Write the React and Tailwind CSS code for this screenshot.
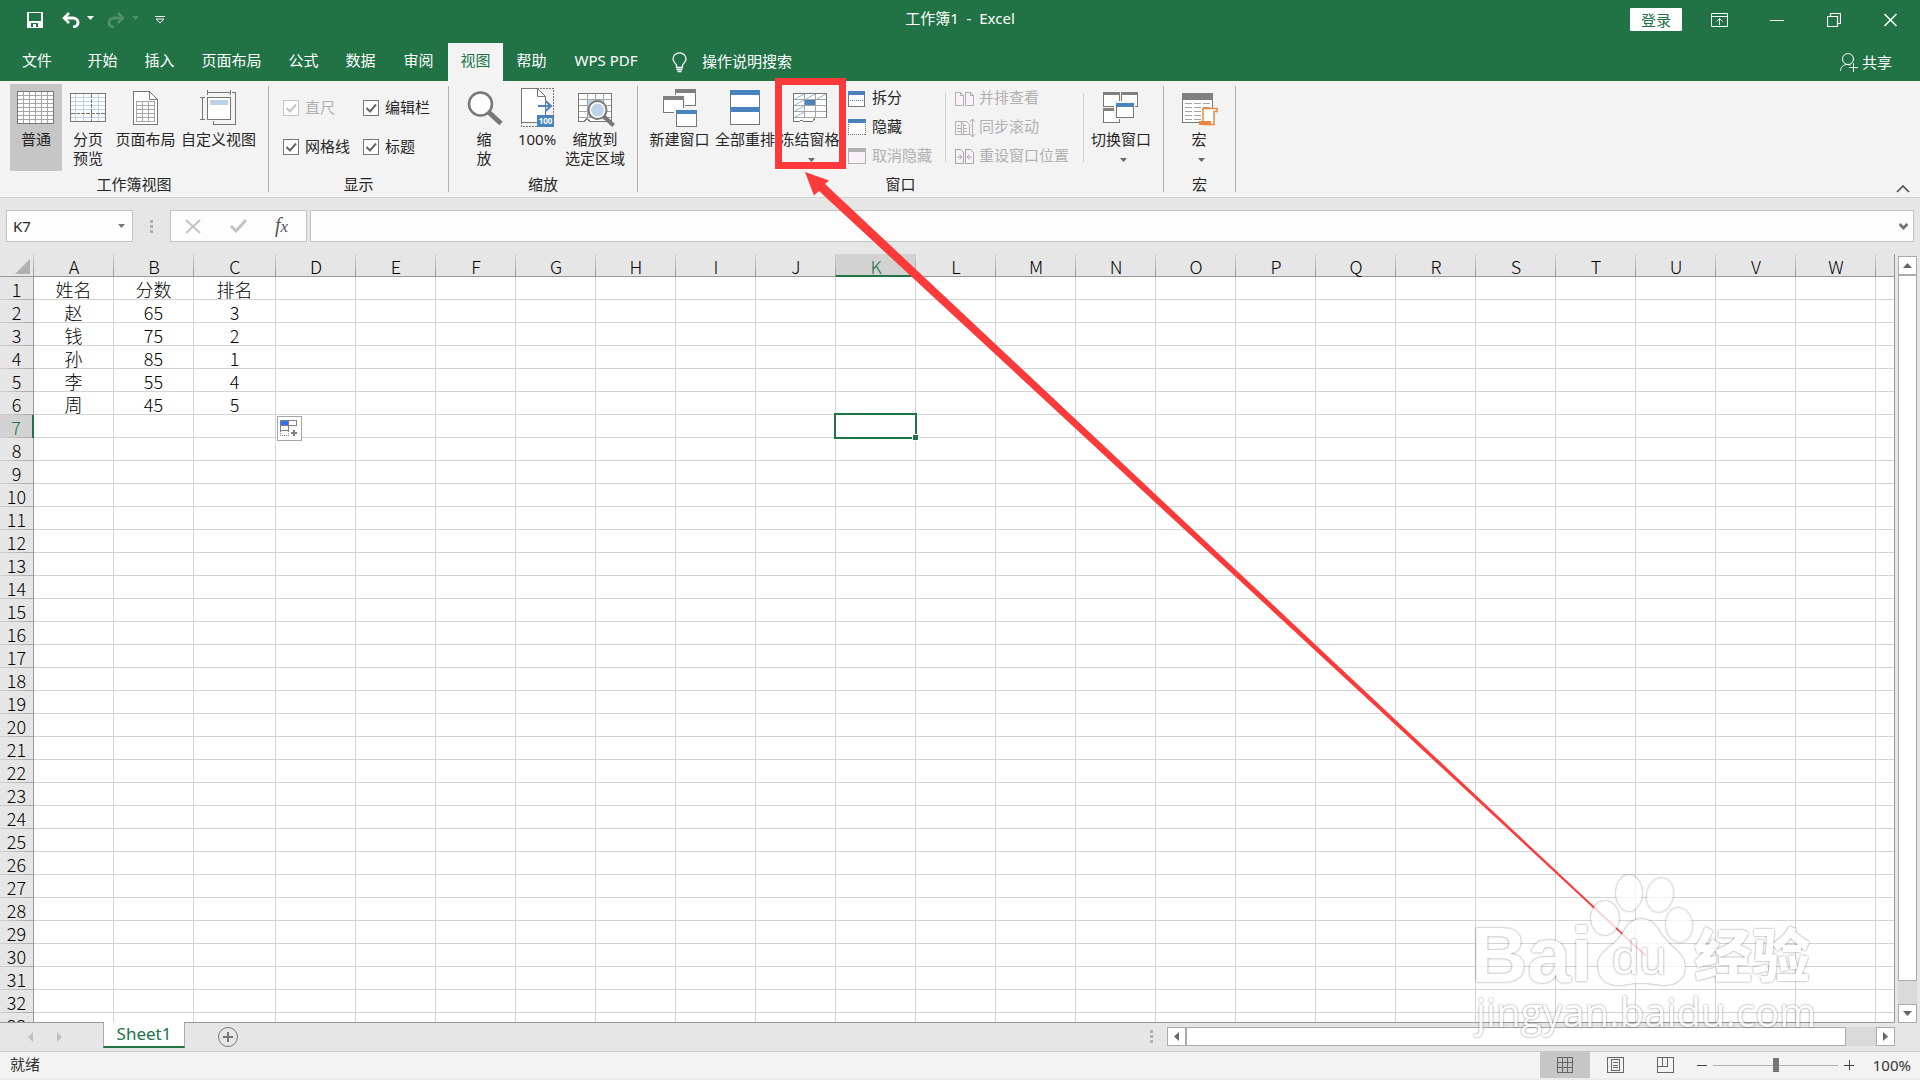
import { useState } from 'react';

const COLUMNS = 'ABCDEFGHIJKLMNOPQRSTUVW'.split('');
const ROWS = Array.from({ length: 33 }, (_, i) => i + 1);

const DATA = {
  1: ['姓名', '分数', '排名'],
  2: ['赵', '65', '3'],
  3: ['钱', '75', '2'],
  4: ['孙', '85', '1'],
  5: ['李', '55', '4'],
  6: ['周', '45', '5'],
};

const TABS = [
  { label: '文件', width: 'w-[74px]' },
  { label: '开始', width: 'w-[57px]' },
  { label: '插入', width: 'w-[57px]' },
  { label: '页面布局', width: 'w-[87px]' },
  { label: '公式', width: 'w-[57px]' },
  { label: '数据', width: 'w-[57px]' },
  { label: '审阅', width: 'w-[59px]' },
  { label: '视图', width: 'w-[55px]' },
  { label: '帮助', width: 'w-[57px]' },
  { label: 'WPS PDF', width: 'w-[92px]' },
];

// small down arrow used all over the ribbon
const Caret = ({ className = '' }) => (
  <svg width="7" height="4" viewBox="0 0 7 4" className={className} aria-hidden="true">
    <path d="M0 0h7L3.5 4z" fill="currentColor" />
  </svg>
);

// ---------- ribbon icons ----------

const BigIcon = ({ children }) => (
  <svg width="40" height="46" viewBox="0 0 40 46" fill="none" stroke="#777" shapeRendering="crispEdges" className="shrink-0" aria-hidden="true">
    {children}
  </svg>
);

const NormalIcon = () => (
  <BigIcon>
    <rect x="1.5" y="7.5" width="36" height="32" fill="#fff" />
    <path stroke="#a6a6a6" d="M7.5 8v31M13.5 8v31M19.5 8v31M25.5 8v31M31.5 8v31M2 11.5h35M2 15.5h35M2 19.5h35M2 23.5h35M2 27.5h35M2 31.5h35M2 35.5h35" />
  </BigIcon>
);

const PageBreakIcon = () => (
  <BigIcon>
    <rect x="2.5" y="9.5" width="35" height="28" fill="#fff" />
    <path stroke="#bdd3ea" d="M7.5 10v27M15.5 10v27M30.5 10v27M3 13.5h34M3 17.5h34M3 21.5h34M3 25.5h34M3 33.5h34" />
    <path stroke="#777" strokeDasharray="4 1" d="M23.5 10v27M3 29.5h34" />
  </BigIcon>
);

const PageLayoutIcon = () => (
  <BigIcon>
    <path fill="#fff" d="M7.5 7.5h16l8 8v25h-24z" />
    <path d="M23.5 7.5v8h8" shapeRendering="auto" />
    <path stroke="#a6a6a6" d="M10.5 17.5h18v20h-18zM10.5 21.5h18M10.5 25.5h18M10.5 29.5h18M10.5 33.5h18M16.5 17.5v20M22.5 17.5v20" />
  </BigIcon>
);

const CustomViewIcon = () => (
  <BigIcon>
    <path d="M32.5 8.5h4v32h-22v-4M8.5 6v5M31.5 6v5M9 8.5h22M3.5 13.5v22M1 13.5h5M1 35.5h5" />
    <rect x="8.5" y="13.5" width="23" height="22" fill="#fff" />
    <path fill="#bdd3ea" stroke="none" d="M11 16h18v5H11z" />
  </BigIcon>
);

const ZoomIcon = () => (
  <BigIcon>
    <g shapeRendering="auto">
      <circle cx="16.5" cy="20" r="11.5" fill="#fff" strokeWidth="2.5" />
      <path strokeWidth="5" d="M25 28.5l12 11" />
    </g>
  </BigIcon>
);

const HundredIcon = () => (
  <BigIcon>
    <path strokeDasharray="2 1" d="M20 4.5h16.5V31M4.5 38v4.5H20" />
    <path fill="#fff" d="M4.5 4.5h16l8 8v25.5h-24z" />
    <path d="M20.5 4.5v8h8" shapeRendering="auto" />
    <path fill="#4a82bd" stroke="none" d="M20 31h17v12H20z" />
    <path stroke="#4a82bd" strokeWidth="2" shapeRendering="auto" d="M21 22h13M28.5 17l5.5 5-5.5 5" />
    <text x="28.5" y="40" fill="#fff" stroke="none" fontSize="8" fontWeight="bold" textAnchor="middle">100</text>
  </BigIcon>
);

const ZoomSelectionIcon = () => (
  <BigIcon>
    <path fill="#fff" stroke="#777" d="M3.5 9.5h33v28H19h-4l-3-3-3 3H3.5z" />
    <path stroke="#a6a6a6" d="M12.5 10v26M20.5 10v26M28.5 10v26M4 15.5h32M4 21.5h32M4 27.5h32M4 33.5h32" />
    <path fill="#bdd3ea" stroke="none" d="M13 16h15v17H13z" />
    <g shapeRendering="auto">
      <circle cx="22.5" cy="26" r="9" fill="#fff" strokeWidth="2" />
      <circle cx="22.5" cy="26" r="6.5" fill="#bdd3ea" stroke="none" />
      <path strokeWidth="4" d="M29 32.5l9.5 9" />
    </g>
  </BigIcon>
);

const MiniWindow = ({ x, y, w = 20, h = 16, color = '#808080', bar = 4 }) => (
  <g>
    <rect x={x + 0.5} y={y + 0.5} width={w} height={h} fill="#fff" />
    <rect x={x} y={y} width={w + 1} height={bar} fill={color} stroke="none" />
  </g>
);

const NewWindowIcon = () => (
  <BigIcon>
    <MiniWindow x={15} y={5} />
    <path fill="#f3f3f3" stroke="none" d="M1 11h24v18H1z" />
    <MiniWindow x={3} y={12} />
    <path fill="#f3f3f3" stroke="none" d="M14 24h23v20H14z" />
    <MiniWindow x={16} y={26} color="#4a82bd" />
  </BigIcon>
);

const ArrangeAllIcon = () => (
  <BigIcon>
    <MiniWindow x={5} y={6} w={29} h={17} color="#4a82bd" bar={5} />
    <MiniWindow x={5} y={23} w={29} h={17} color="#4a82bd" bar={5} />
  </BigIcon>
);

const FreezeIcon = () => (
  <BigIcon>
    <path fill="#fff" d="M3.5 9.5h33v24H25.5l-3 4h-8l-3-1-3 1h-5z" />
    <path stroke="#8db4dc" shapeRendering="auto" d="M5 15l9-5M5 21l9-5M5 27l9-5M5 33l9-5M16 15l9-5M27 15l9-5" />
    <path stroke="#a6a6a6" d="M14.5 10v24M25.5 10v24M4 15.5h32M4 21.5h32M4 27.5h32M4 33.5h32" />
    <path fill="#4a82bd" stroke="none" d="M15 16h10v5H15z" />
  </BigIcon>
);

const SwitchIcon = () => (
  <BigIcon>
    <MiniWindow x={2} y={8} w={16} h={14} bar={3} />
    <MiniWindow x={20} y={8} w={16} h={14} bar={3} />
    <MiniWindow x={2} y={24} w={16} h={14} bar={3} />
    <path fill="#f3f3f3" stroke="none" d="M13 17h21v18H13z" />
    <MiniWindow x={15} y={19} w={17} h={14} color="#4a82bd" bar={4} />
  </BigIcon>
);

const MacroIcon = () => (
  <BigIcon>
    <MiniWindow x={3} y={9} w={30} h={29} bar={7} />
    <path stroke="#a6a6a6" strokeDasharray="7 2" d="M6 19.5h25M6 23.5h25M6 27.5h25M6 31.5h25M6 35.5h25" />
    <path fill="#fff" stroke="#e8883a" strokeWidth="1.5" shapeRendering="auto" d="M24 38V24.5h14v3h-3V40.5H24" />
    <path fill="#e8883a" stroke="none" d="M20 37h12v4H20z" />
  </BigIcon>
);

const SmallIcon = ({ children, stroke = '#777' }) => (
  <svg width="20" height="20" viewBox="0 0 20 20" fill="none" stroke={stroke} shapeRendering="crispEdges" className="shrink-0" aria-hidden="true">
    {children}
  </svg>
);

const SplitIcon = () => (
  <SmallIcon>
    <rect x="0.5" y="2.5" width="16" height="15" fill="#fff" />
    <path fill="#4a82bd" stroke="none" d="M0 2h17v4H0z" />
    <path stroke="#4a82bd" strokeDasharray="1 1" d="M2 11.5h13" />
  </SmallIcon>
);

const HideIcon = () => (
  <SmallIcon>
    <rect x="0.5" y="2.5" width="17" height="14" fill="#fff" strokeDasharray="1 1" />
    <path fill="#4a82bd" stroke="none" d="M0 1h18v4H0z" />
  </SmallIcon>
);

const UnhideIcon = () => (
  <SmallIcon stroke="#b1b1b1">
    <rect x="0.5" y="2.5" width="17" height="14" fill="#f8f2f8" />
    <path fill="#b1b1b1" stroke="none" d="M0 1h18v4H0z" />
  </SmallIcon>
);

const SideBySideIcon = () => (
  <SmallIcon stroke="#b1b1b1">
    <path fill="#f8f2f8" d="M.5 3.5h5l3 3v10h-8zM10.5 3.5h5l3 3v10h-8zM5.5 3.5v3h3M15.5 3.5v3h3" />
  </SmallIcon>
);

const SyncScrollIcon = () => (
  <SmallIcon stroke="#b1b1b1">
    <path fill="#f8f2f8" d="M.5 3.5h5l3 3v10h-8zM6.500 3.500h5l3 3v10h-8z" />
    <path d="M2 7.5h3M2 10.5h4M2 13.5h4M8 7.5h3M8 10.5h4M8 13.5h4" />
    <path shapeRendering="auto" d="M17.5 1v18M15 4l2.5-3L20 4M15 16l2.5 3 2.5-3" />
  </SmallIcon>
);

const ResetIcon = () => (
  <SmallIcon stroke="#a6a6a6">
    <path fill="#f8f2f8" d="M.5 2.5h5l3 3v11h-8zM10.5 2.5h5l3 3v11h-8z" />
    <path shapeRendering="auto" d="M2 10h5M4.5 7.5L7 10l-2.5 2.5M17 10h-5M14.5 7.5L12 10l2.5 2.5" />
  </SmallIcon>
);

// ---------- ribbon pieces ----------

const Group = ({ label, className = '', children }) => (
  <section className={`my-[5px] flex h-[106px] shrink-0 flex-col border-r border-[#b1b1b1] ${className}`} aria-label={label}>
    <div className="-mt-[2px] flex h-[92px] items-start">{children}</div>
    <div className="text-center leading-[16px]">{label}</div>
  </section>
);

const BigButton = ({ icon, lines, width, active, caret }) => (
  <button type="button" className={`flex h-[87px] shrink-0 flex-col items-center leading-[19px] whitespace-nowrap ${width} ${active ? 'bg-[#c6c6c6]' : ''}`}>
    {icon}
    {lines.map((l) => (
      <span key={l}>{l}</span>
    ))}
    {caret && <Caret className="mt-[9px] ml-1 text-[#666]" />}
  </button>
);

const SmallButton = ({ icon, label, disabled }) => (
  <button type="button" disabled={disabled} className="flex h-[29px] items-center gap-1 whitespace-nowrap disabled:text-[#b1b1b1]">
    {icon}
    <span className="pb-[2px]">{label}</span>
  </button>
);

const Check = ({ label, disabled }) => {
  const [on, setOn] = useState(true);
  return (
    <label className={`flex h-[39px] items-center gap-[6px] whitespace-nowrap ${disabled ? 'text-[#b1b1b1]' : ''}`}>
      <span className="grid size-4 *:col-start-1 *:row-start-1">
        <input
          type="checkbox"
          checked={on}
          disabled={disabled}
          onChange={(e) => setOn(e.target.checked)}
          className="peer size-4 appearance-none border border-[#777] bg-white disabled:border-[#c6c6c6]"
        />
        <svg viewBox="0 0 16 16" className="pointer-events-none hidden size-4 text-[#666] peer-checked:block peer-disabled:text-[#c6c6c6]" fill="none" stroke="currentColor" strokeWidth="2">
          <path d="M3.5 8l3.5 3.5L13 4.5" />
        </svg>
      </span>
      {label}
    </label>
  );
};

const Ribbon = () => (
  <div className="flex h-[117px] overflow-hidden border-b border-[#d2d2d2] bg-[#f3f3f3]">
    <Group label="工作簿视图" className="w-[269px]">
      <div className="flex pl-[10px]">
        <BigButton icon={<NormalIcon />} lines={['普通']} width="w-[52px]" active />
        <BigButton icon={<PageBreakIcon />} lines={['分页', '预览']} width="w-[52px]" />
        <BigButton icon={<PageLayoutIcon />} lines={['页面布局']} width="w-[63px]" />
        <BigButton icon={<CustomViewIcon />} lines={['自定义视图']} width="w-[83px]" />
      </div>
    </Group>
    <Group label="显示" className="w-[180px]">
      <div className="grid grid-cols-[80px_auto] pt-1 pl-[14px]">
        <Check label="直尺" disabled />
        <Check label="编辑栏" />
        <Check label="网格线" />
        <Check label="标题" />
      </div>
    </Group>
    <Group label="缩放" className="w-[189px]">
      <div className="flex pl-[6px]">
        <BigButton icon={<ZoomIcon />} lines={['缩', '放']} width="w-[58px]" />
        <BigButton icon={<HundredIcon />} lines={['100%']} width="w-[48px]" />
        <BigButton icon={<ZoomSelectionIcon />} lines={['缩放到', '选定区域']} width="w-[68px]" />
      </div>
    </Group>
    <Group label="窗口" className="w-[526px]">
      <div className="flex pl-2">
        <BigButton icon={<NewWindowIcon />} lines={['新建窗口']} width="w-[67px]" />
        <BigButton icon={<ArrangeAllIcon />} lines={['全部重排']} width="w-[64px]" />
        <BigButton icon={<FreezeIcon />} lines={['冻结窗格']} width="w-[65px]" caret />
      </div>
      <div className="ml-[6px] w-[97px]">
        <SmallButton icon={<SplitIcon />} label="拆分" />
        <SmallButton icon={<HideIcon />} label="隐藏" />
        <SmallButton icon={<UnhideIcon />} label="取消隐藏" disabled />
      </div>
      <div className="mt-[9px] h-[69px] w-px bg-[#d2d2d2]" />
      <div className="ml-[9px] w-[128px]">
        <SmallButton icon={<SideBySideIcon />} label="并排查看" disabled />
        <SmallButton icon={<SyncScrollIcon />} label="同步滚动" disabled />
        <SmallButton icon={<ResetIcon />} label="重设窗口位置" disabled />
      </div>
      <div className="mt-[9px] h-[69px] w-px bg-[#d2d2d2]" />
      <BigButton icon={<SwitchIcon />} lines={['切换窗口']} width="w-[74px]" caret />
    </Group>
    <Group label="宏" className="w-[72px]">
      <BigButton icon={<MacroIcon />} lines={['宏']} width="w-[70px]" caret />
    </Group>
    <button type="button" aria-label="折叠功能区" className="mr-[10px] mb-1 ml-auto self-end">
      <svg width="14" height="8" viewBox="0 0 14 8" fill="none" stroke="#444" strokeWidth="1.5">
        <path d="M1 7l6-6 6 6" />
      </svg>
    </button>
  </div>
);

// ---------- title bar and tabs ----------

const TitleBar = () => (
  <header className="grid h-[43px] grid-cols-[1fr_auto_1fr] items-start text-white">
    <div className="flex h-10 items-center pl-[27px]">
      <button type="button" aria-label="保存">
        <svg width="16" height="16" viewBox="0 0 16 16" shapeRendering="crispEdges">
          <path fill="#fff" fillRule="evenodd" d="M0 0h16v16H0zM2 1v8h12V1zM4 11v4h2v-3h3v3h2v-4z" />
        </svg>
      </button>
      <button type="button" aria-label="撤消" className="ml-[19px] flex items-center gap-[7px]">
        <svg width="18" height="16" viewBox="0 0 18 16" fill="none" stroke="#fff" strokeWidth="3">
          <path d="M2 6h9a5 4.500 0 0 1 0 9" />
          <path d="M7 1L2 6l5 5" strokeWidth="2.5" />
        </svg>
        <Caret className="mb-1" />
      </button>
      <button type="button" aria-label="恢复" disabled className="ml-[13px] flex items-center gap-[7px] text-[#4d906b]">
        <svg width="18" height="16" viewBox="0 0 18 16" fill="none" stroke="currentColor" strokeWidth="3">
          <path d="M16 6H7a5 4.500 0 0 0 0 9" />
          <path d="M11 1l5 5-5 5" strokeWidth="2.5" />
        </svg>
        <Caret className="mb-1" />
      </button>
      <button type="button" aria-label="自定义快速访问工具栏" className="ml-4">
        <svg width="10" height="8" viewBox="0 0 10 8" fill="none" stroke="#fff">
          <path d="M0 .5h10M1 3l4 4 4-4z" />
        </svg>
      </button>
    </div>
    <h1 className="pt-[8px] leading-[20px] whitespace-pre">工作簿1  -  Excel</h1>
    <div className="flex h-[39px] items-center justify-end pr-[23px]">
      <button type="button" className="h-[23px] w-[52px] rounded-[1px] bg-white leading-[20px] text-[#217346]">登录</button>
      <button type="button" aria-label="功能区显示选项" className="ml-[29px]">
        <svg width="17" height="14" viewBox="0 0 17 14" fill="none" stroke="#fff">
          <path d="M.5.5h16v13H.5zM.5 3.5h16M8.5 12V5.5M5.5 8.5l3-3 3 3" />
        </svg>
      </button>
      <button type="button" aria-label="最小化" className="ml-[42px]">
        <svg width="14" height="14" viewBox="0 0 14 14" stroke="#fff">
          <path d="M0 7.5h14" />
        </svg>
      </button>
      <button type="button" aria-label="向下还原" className="ml-[43px]">
        <svg width="14" height="14" viewBox="0 0 14 14" fill="none" stroke="#fff" strokeWidth="1.2">
          <path d="M.5 3.5h10v10H.5zM3.500 3.500v-3h10v10h-3" />
        </svg>
      </button>
      <button type="button" aria-label="关闭" className="ml-[43px]">
        <svg width="13" height="14" viewBox="0 0 13 14" stroke="#fff" strokeWidth="1.5">
          <path d="M.5 1l12 12M12.500 1l-12 12" />
        </svg>
      </button>
    </div>
  </header>
);

const TabBar = ({ active, onSelect }) => (
  <nav className="flex h-[38px] items-stretch text-white">
    {TABS.map((t) => (
      <button
        key={t.label}
        type="button"
        onClick={() => onSelect(t.label)}
        className={`shrink-0 pb-1 whitespace-nowrap ${t.width} ${active === t.label ? 'bg-[#f3f3f3] text-[#217346]' : ''}`}
      >
        {t.label}
      </button>
    ))}
    <button type="button" className="ml-5 flex items-center gap-[15px] whitespace-nowrap">
      <svg width="15" height="21" viewBox="0 0 15 21" fill="none" stroke="#fff" strokeWidth="1.3">
        <path d="M4.5 15.5v-2.5C3.5 11 1 10 1 7a6.5 6.2 0 0 1 13 0c0 3-2.5 4-3.5 6v2.5zM4.5 17.5h6M5.5 19.5h4" />
      </svg>
      <span className="pb-[2px]">操作说明搜索</span>
    </button>
    <button type="button" className="mr-[28px] ml-auto flex items-center gap-1 whitespace-nowrap">
      <svg width="18" height="19" viewBox="0 0 18 19" fill="none" stroke="#fff">
        <circle cx="8" cy="6" r="5.5" />
        <path d="M.5 18c0-4 3-6.5 7-6.5 1 0 2 .2 3 .6M13.5 10v9M9 14.500h9" />
      </svg>
      共享
    </button>
  </nav>
);

const Dots = () => (
  <div className="flex flex-col gap-[2px]">
    <i className="size-[3px] bg-[#b1b1b1]" />
    <i className="size-[3px] bg-[#b1b1b1]" />
    <i className="size-[3px] bg-[#b1b1b1]" />
  </div>
);

const FormulaBar = () => (
  <div className="flex h-14 shrink-0 items-center pr-[6px] pl-[6px]">
    <div className="flex h-8 w-[127px] items-center border border-[#c3c3c3] bg-[#fdfdfd] pr-[7px] pl-[6px]">
      <input aria-label="名称框" defaultValue="K7" className="w-0 flex-1 outline-none" />
      <Caret className="text-[#777]" />
    </div>
    <div className="mx-[17px]">
      <Dots />
    </div>
    <div className="flex h-8 w-[137px] items-center border border-[#c3c3c3] bg-[#fdfdfd] pl-[14px]">
      <button type="button" aria-label="取消">
        <svg width="16" height="15" viewBox="0 0 16 15" stroke="#c3c3c3" strokeWidth="2">
          <path d="M1 1l14 13M15 1L1 14" />
        </svg>
      </button>
      <button type="button" aria-label="输入" className="ml-[29px]">
        <svg width="17" height="14" viewBox="0 0 17 14" fill="none" stroke="#c3c3c3" strokeWidth="3">
          <path d="M1 7l5 5L16 1" />
        </svg>
      </button>
      <button type="button" aria-label="插入函数" className="ml-[28px] font-['Liberation_Serif',serif] text-[20px] leading-[24px] text-[#555] italic">
        f<span className="text-[17px]">x</span>
      </button>
    </div>
    <div className="ml-[3px] flex h-8 flex-1 items-center border border-[#c3c3c3] bg-[#fdfdfd] pr-[5px] pl-2">
      <input aria-label="编辑栏" className="w-0 flex-1 outline-none" />
      <svg width="9" height="7" viewBox="0 0 9 7" fill="none" stroke="#777" strokeWidth="3">
        <path d="M.5 1l4 4 4-4" />
      </svg>
    </div>
  </div>
);

// ---------- sheet ----------

const FillOptions = () => (
  <button type="button" aria-label="自动填充选项" className="absolute top-px left-px z-10 size-[25px] border border-[#a6a6a6] bg-white">
    <svg width="23" height="23" viewBox="0 0 23 23" fill="none" stroke="#808080" shapeRendering="crispEdges">
      <path d="M2.5 3.5h16v5h-16zM10.5 3.5v10h-8v-5" />
      <path fill="#2f6fff" stroke="none" d="M3 4h7v4H3z" />
      <path strokeDasharray="1 1" d="M2.5 14v4.5h8V14" />
      <path strokeWidth="2" d="M16 13v6M13 16h6" />
    </svg>
  </button>
);

const ColumnHead = ({ label }) => {
  const selected = label === 'K';
  return (
    <th scope="col" className={`relative h-[23px] border-b p-0 font-light ${selected ? 'border-[#217346] bg-[#d2d2d2] text-[#217346]' : 'border-[#999]'}`}>
      <span className="block h-[22px] leading-[24px]">{label}</span>
      {selected && <span className="absolute inset-x-0 bottom-0 h-px bg-[#217346]" />}
      <span className="absolute inset-y-0 right-0 w-px bg-linear-to-b from-[#d2d2d2] to-[#999]" />
    </th>
  );
};

const Grid = () => (
  <div className="min-w-0 flex-1 overflow-hidden border-r border-b border-[#999]">
    <table className="w-full table-fixed border-separate border-spacing-0 text-center text-[18px] font-light text-black">
      <colgroup>
        <col className="w-[34px]" />
        {COLUMNS.map((c) => (
          <col key={c} className={c === 'C' ? 'w-[82px]' : 'w-[80px]'} />
        ))}
        <col />
      </colgroup>
      <thead>
        <tr>
          <th className="relative h-[23px] border-b border-[#999] p-0">
            <svg width="15" height="15" viewBox="0 0 15 15" className="mt-[2px] ml-[15px]">
              <path d="M15 0v15H0z" fill="#b1b1b1" />
            </svg>
            <span className="absolute inset-y-0 right-0 w-px bg-linear-to-b from-[#d2d2d2] to-[#999]" />
          </th>
          {COLUMNS.map((c) => (
            <ColumnHead key={c} label={c} />
          ))}
          <th className="border-b border-[#999] bg-[#e6e6e6] p-0" />
        </tr>
      </thead>
      <tbody>
        {ROWS.map((r) => (
          <tr key={r}>
            <th
              scope="row"
              className={`relative h-[23px] p-0 font-light ${r === 7 ? 'border-r-2 border-[#217346] bg-[#d2d2d2] text-[#217346]' : 'border-r border-[#999]'}`}
            >
              <span className="block h-[22px] leading-[24px]">{r}</span>
              <span className="block h-px bg-linear-to-r from-[#d2d2d2] to-[#a6a6a6]" />
            </th>
            {COLUMNS.map((c, i) => (
              <td key={c} className="relative h-[23px] border-r border-b border-[#d4d4d4] bg-white p-0">
                {DATA[r] && <span className="block h-[22px] leading-[24px]">{DATA[r][i]}</span>}
                {r === 7 && c === 'D' && <FillOptions />}
                {r === 7 && c === 'K' && (
                  <span className="absolute -inset-[2px] z-10 border-2 border-[#217346]">
                    <i className="absolute -right-[4px] -bottom-[4px] size-[7px] border border-white bg-[#217346]" />
                  </span>
                )}
              </td>
            ))}
            <td className="border-b border-[#d4d4d4] bg-white p-0" />
          </tr>
        ))}
      </tbody>
    </table>
  </div>
);

const ScrollButton = ({ label, d }) => (
  <button type="button" aria-label={label} className="flex size-[19px] shrink-0 items-center justify-center border border-[#ababab] bg-white">
    <svg width="9" height="9" viewBox="0 0 9 9" fill="#666">
      <path d={d} />
    </svg>
  </button>
);

const VerticalScroll = () => (
  <div className="mt-[2px] mr-[3px] ml-[3px] flex w-[19px] flex-col bg-[#dadada]">
    <ScrollButton label="向上滚动" d="M0 7l4.500-5L9 7z" />
    <div className="flex-1 border border-[#ababab] bg-white" />
    <div className="h-[23px]" />
    <ScrollButton label="向下滚动" d="M0 2l4.500 5L9 2z" />
  </div>
);

const SheetBar = () => (
  <div className="flex h-[29px] shrink-0 items-start border-b border-[#c6c6c6] pr-[25px]">
    <div className="flex w-[103px] items-center gap-6 pt-[9px] pl-7">
      <svg width="5" height="10" viewBox="0 0 5 10" fill="#c0c0c0"><path d="M5 0v10L0 5z" /></svg>
      <svg width="5" height="10" viewBox="0 0 5 10" fill="#c0c0c0"><path d="M0 0v10l5-5z" /></svg>
    </div>
    <button type="button" className="-mt-px h-[26px] w-[82px] border-x border-b-2 border-x-[#ababab] border-b-[#217346] bg-white text-[17px] leading-[20px] text-[#217346]">
      Sheet1
    </button>
    <button type="button" aria-label="新工作表" className="mt-[3px] ml-[32px]">
      <svg width="22" height="22" viewBox="0 0 22 22" fill="none" stroke="#777">
        <circle cx="11" cy="11" r="9.5" />
        <path strokeWidth="2" d="M11 6v10M6 11h10" />
      </svg>
    </button>
    <div className="mt-[7px] mr-[14px] ml-auto">
      <Dots />
    </div>
    <div className="mt-1 flex w-[728px] bg-[#dadada]">
      <ScrollButton label="向左滚动" d="M7 0v9L2 4.500z" />
      <div className="flex-1 border border-[#ababab] bg-white" />
      <div className="w-[30px]" />
      <ScrollButton label="向右滚动" d="M2 0v9l5-4.500z" />
    </div>
  </div>
);

const StatusBar = () => {
  const [zoom, setZoom] = useState(100);
  return (
    <footer className="flex h-7 shrink-0 items-stretch justify-between border-b-2 border-[#ececec] bg-[#f3f3f3] pr-[9px] pl-[10px] text-[#333]">
      <span className="leading-[25px]">就绪</span>
      <div className="flex">
        <button type="button" aria-label="普通" className="flex w-[50px] items-center justify-center bg-[#c6c6c6]">
          <svg width="16" height="16" viewBox="0 0 16 16" fill="none" stroke="#666" shapeRendering="crispEdges">
            <path d="M.5.5h15v15H.5zM5.5 0v16M10.5 0v16M0 5.5h16M0 10.5h16" />
          </svg>
        </button>
        <button type="button" aria-label="页面布局" className="flex w-[50px] items-center justify-center">
          <svg width="17" height="16" viewBox="0 0 17 16" fill="none" stroke="#666" shapeRendering="crispEdges">
            <path d="M.5.5h16v15H.5zM4.5 2.5h8v11h-8zM6 5.5h5M6 8.5h5M6 10.500h5" />
          </svg>
        </button>
        <button type="button" aria-label="分页预览" className="flex w-[50px] items-center justify-center">
          <svg width="17" height="16" viewBox="0 0 17 16" fill="none" stroke="#666" shapeRendering="crispEdges">
            <path d="M.5.5h16v15H.5zM.5 9.5h10v-9M5.5.5v9" />
          </svg>
        </button>
        <button type="button" aria-label="缩小" className="ml-[7px]">
          <svg width="10" height="10" viewBox="0 0 10 10" stroke="#444"><path d="M0 5.5h10" /></svg>
        </button>
        <input
          type="range"
          aria-label="显示比例"
          min="10"
          max="190"
          value={zoom}
          onChange={(e) => setZoom(Number(e.target.value))}
          className="mx-[6px] my-auto h-[14px] w-[125px] appearance-none bg-transparent bg-[linear-gradient(#b1b1b1,#b1b1b1)] bg-[length:100%_1px] bg-center bg-no-repeat [&::-webkit-slider-thumb]:h-[14px] [&::-webkit-slider-thumb]:w-[6px] [&::-webkit-slider-thumb]:appearance-none [&::-webkit-slider-thumb]:bg-[#777]"
        />
        <button type="button" aria-label="放大">
          <svg width="10" height="10" viewBox="0 0 10 10" stroke="#444"><path d="M0 5.5h10M5.5 0v10" /></svg>
        </button>
        <output className="w-[57px] text-right leading-[26px]">{zoom}%</output>
      </div>
    </footer>
  );
};

// ---------- things lying over the window ----------

const PAD = 'M175 49C188 49 192 60 198 68C206 78 219 84 219 97C219 110 208 116 197 115C188 114 182 113 174 113C165 113 158 116 149 115C138 114 132 106 132 95C132 82 147 77 154 67C160 58 164 49 175 49Z';

const Watermark = () => (
  <svg
    width="364"
    height="175"
    viewBox="0 0 364 175"
    fill="#fff"
    className="pointer-events-none absolute right-[90px] bottom-[35px] z-30 opacity-75 *:drop-shadow-[0_0_1px_rgba(0,0,0,0.6)]"
    aria-hidden="true"
  >
    <text x="5" y="112" fontSize="78" fontWeight="bold" fontFamily="Liberation Sans, sans-serif">Bai</text>
    <ellipse cx="139" cy="48" rx="14" ry="17" />
    <ellipse cx="163" cy="23" rx="13" ry="18" />
    <ellipse cx="194" cy="25" rx="13" ry="17" transform="rotate(12 194 25)" />
    <ellipse cx="213" cy="55" rx="13" ry="17" transform="rotate(-6 213 55)" />
    <path d={PAD} />
    <text x="146" y="104" fontSize="49" fontFamily="Liberation Sans, sans-serif">du</text>
    <text x="228" y="107" fontSize="58" fontWeight="900" fontFamily="Noto Sans CJK SC, sans-serif">经验</text>
    <text x="10" y="157" fontSize="40" fontFamily="Open Sans, sans-serif">jingyan.baidu.com</text>
  </svg>
);

const Callout = () => (
  <svg className="pointer-events-none absolute inset-0 z-20 size-full overflow-visible" aria-hidden="true">
    <rect x="778.5" y="81.5" width="64" height="84" fill="none" stroke="#fd3a3a" strokeWidth="7" />
    <path fill="#fd3a3a" d="M805 172L829 180.5L825 184L1646 955L1645 956L819 191L814 195.5Z" />
  </svg>
);

function App() {
  const [tab, setTab] = useState('视图');

  return (
    <div className="relative flex h-screen flex-col overflow-hidden bg-[#e6e6e6] font-['Noto_Sans','Noto_Sans_CJK_SC',sans-serif] text-[15px] text-[#262626]">
      <div className="shrink-0 bg-[#217346]">
        <TitleBar />
        <TabBar active={tab} onSelect={setTab} />
        <Ribbon />
      </div>
      <FormulaBar />
      <main className="flex min-h-0 flex-1 font-['Noto_Sans_CJK_SC',sans-serif]">
        <Grid />
        <VerticalScroll />
      </main>
      <SheetBar />
      <StatusBar />
      <Callout />
      <Watermark />
    </div>
  );
}

export default App;
